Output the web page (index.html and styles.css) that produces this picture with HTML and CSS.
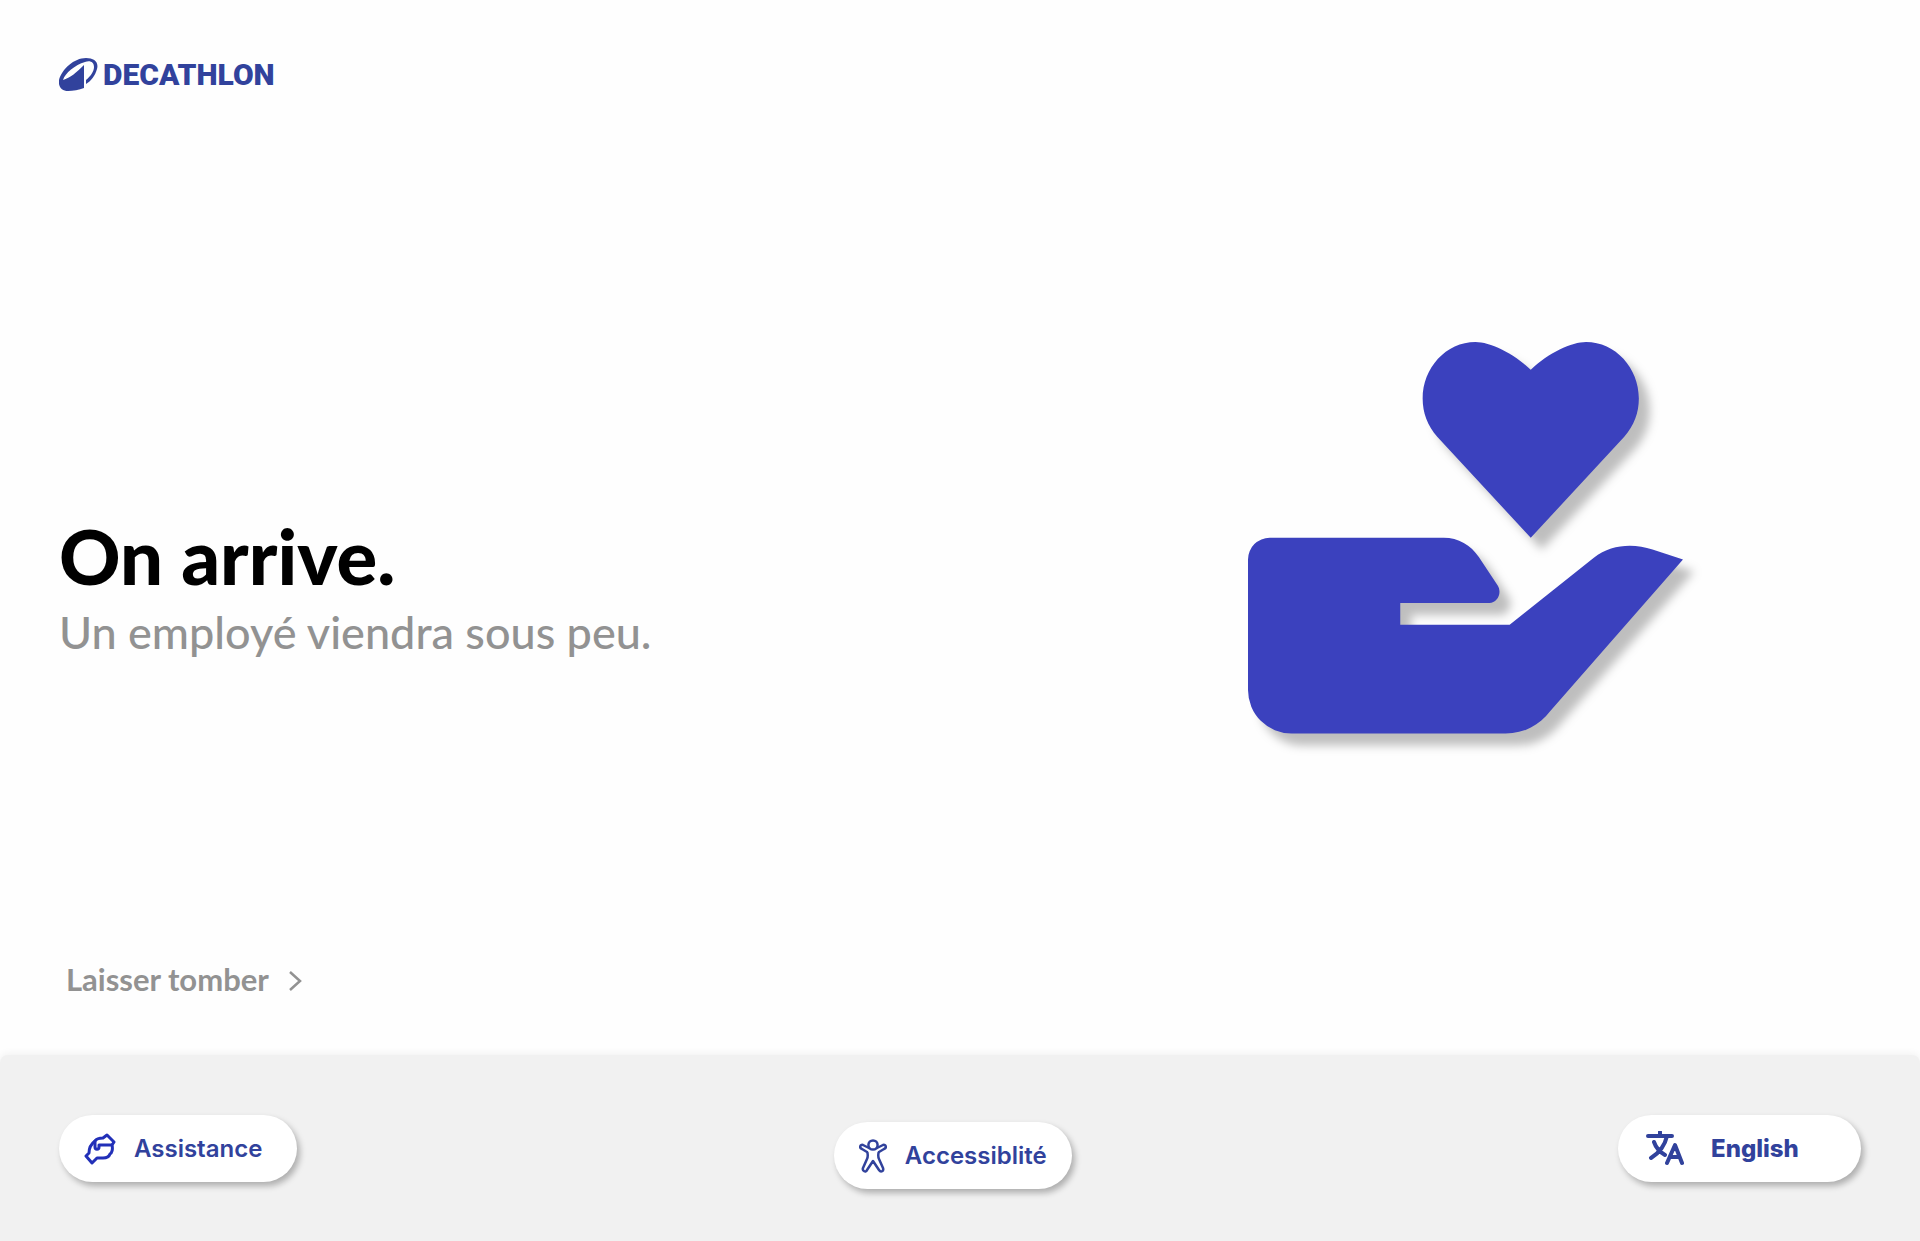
FILE: index.html
```
<!DOCTYPE html>
<html lang="fr">
<head>
    <meta charset="UTF-8">
    <meta name="viewport" content="width=device-width, initial-scale=1.0">
    <title>Decathlon - Assistance</title>
    <link rel="stylesheet" href="styles.css">
</head>
<body>
    <header class="header">
        <a href="#" class="logo">
            <svg class="logo-mark" viewBox="0 0 40 33" aria-hidden="true">
                <path fill-rule="evenodd" d="M27 0C35 0 40 4 38 11C36 18 32 23 27 26V22C32 18 35 13 35 9C35 4 31 2 26 4C16 7 6 15 4 22C11 20 18 14 25 7V30C20 32 14 33 9 33C3 33 -1 29 0 22C3 11 15 0 27 0Z"/>
            </svg>
            <span class="logo-text">DECATHLON</span>
        </a>
    </header>

    <main class="main">
        <div class="message">
            <h1 class="title">On arrive.</h1>
            <p class="subtitle">Un employé viendra sous peu.</p>
        </div>
        <div class="art">
            <svg class="hand" viewBox="0 0 20 18" role="img" aria-label="Main avec un coeur">
                <path d="M13 1.28C12.2.5 11.1 0 10.46 0C9.1 0 8.03 1.2 8.03 2.6C8.03 3.25 8.25 3.85 8.7 4.36L13 9L17.3 4.36C17.75 3.85 17.97 3.25 17.97 2.6C17.97 1.2 16.9 0 15.54 0C14.9 0 13.8.5 13 1.28Z"/>
                <path d="M0 10A1 1 0 0 1 1 9H9C9.67 9 10.25 9.33 10.62 9.9L11.48 11.2C11.7 11.55 11.45 12 11.1 12H7V13H12.03L15.9 9.92C16.7 9.3 17.7 9.25 18.6 9.54L20 10L13.9 16.96C13.4 17.6 12.7 18 11.85 18H2A2 2 0 0 1 0 16Z"/>
            </svg>
        </div>
        <a href="#" class="cancel">
            Laisser tomber
            <svg class="chevron" viewBox="0 0 12 20" aria-hidden="true"><path d="M1 1L11 10L1 19"/></svg>
        </a>
    </main>

    <footer class="footer">
        <button type="button" class="pill">
            <svg class="icon icon-help" viewBox="0 0 32 32" aria-hidden="true">
                <path d="M23 2L30 9L28 12C29 16 28 20 26 21C25 24 23 25 19 25H13L8 30L2 23L5 20C5 15 7 11 11 8C13 5 16 5 19 5Z"/>
                <path d="M11 8V14C11 17 15 17 15 14V12H28"/>
            </svg>
            Assistance
        </button>
        <button type="button" class="pill pill-middle">
            <svg class="icon icon-access" viewBox="0 0 28 34" aria-hidden="true">
                <circle cx="14" cy="6" r="4.6"/>
                <path d="M10 9L4 6C1 5 0 9 3 10L8 13C9 14 9 18 8 20L4 29C3 32 7 34 8 31L14 22L20 31C22 34 25 32 24 29L20 20C19 18 19 14 20 13L25 10C28 9 27 5 24 6L18 9"/>
            </svg>
            Accessiblité
        </button>
        <button type="button" class="pill pill-lang">
            <svg class="icon icon-lang" viewBox="0 0 38 36" aria-hidden="true">
                <path d="M2 5H26M14 1V5M21 5C19 14 13 22 5 27M8 11C10 17 14 21 19 24M21 32L29 14L36 32M24 26H33"/>
            </svg>
            English
        </button>
    </footer>
</body>
</html>
```

FILE: styles.css
```
*{
    box-sizing: border-box;
}
body{
    margin: 0;
    min-height: 100vh;
    display: flex;
    flex-direction: column;
    background: #fefefe;
    font-family: Lato, "Liberation Sans", sans-serif;
}
a{
    text-decoration: none;
}
h1,p{
    margin: 0;
}
/* logo */
.header{
    padding: 58px 59px 0;
}
.logo{
    display: inline-flex;
    align-items: center;
    gap: 4px;
    height: 33px;
    color: #31429c;
}
.logo-mark{
    width: 40px;
    height: 33px;
    fill: currentColor;
}
.logo-text{
    font-family: Roboto, "Liberation Sans", sans-serif;
    font-size: 30px;
    font-weight: 900;
    line-height: 32px;
}
/* message */
.main{
    flex: 1;
    display: grid;
    grid-template-columns: 1fr 1fr;
    grid-template-rows: 1fr auto;
    padding: 0 59px 58px;
}
.message{
    align-self: center;
    padding-top: 122px;
}
.title{
    margin-bottom: 6px;
    font-size: 76px;
    font-weight: 900;
    line-height: 80px;
    color: #000;
}
.subtitle{
    font-size: 45px;
    font-weight: 500;
    line-height: 60px;
    color: #929292;
}
.art{
    display: flex;
    align-items: center;
    justify-content: flex-end;
    padding: 20px 178px 0 0;
}
.hand{
    width: 435px;
    fill: #3b41be;
    overflow: visible;
    filter: drop-shadow(11px 12px 5px rgba(0,0,0,.25));
}
.cancel{
    display: flex;
    align-items: baseline;
    justify-self: start;
    gap: 20px;
    padding-left: 7px;
    font-size: 31px;
    font-weight: 700;
    line-height: 36px;
    color: #929292;
}
.chevron{
    width: 12px;
    height: 20px;
    fill: none;
    stroke: currentColor;
    stroke-width: 2.5;
    overflow: visible;
}
/* bottom bar */
.footer{
    display: grid;
    grid-template-columns: 43% 1fr auto;
    justify-items: start;
    min-height: 186px;
    padding: 60px 59px 52px;
    background: #f1f1f1;
    border-radius: 8px 8px 0 0;
    box-shadow: 0 -1px 8px rgba(0,0,0,.06);
}
.pill{
    display: flex;
    align-items: center;
    gap: 18px;
    min-width: 238px;
    height: 67px;
    padding: 0 25px;
    border: 0;
    border-radius: 34px;
    background: #fff;
    box-shadow: 3px 4px 6px rgba(0,0,0,.28);
    color: #31429c;
    font-family: Inter, "Liberation Sans", sans-serif;
    font-size: 24px;
    font-weight: 600;
    cursor: pointer;
}
.pill-middle{
    align-self: end;
}
.pill-lang{
    gap: 27px;
    min-width: 243px;
    padding-left: 28px;
    font-weight: 800;
}
.icon{
    flex: none;
    fill: none;
    stroke: currentColor;
    stroke-width: 3;
    stroke-linecap: round;
    stroke-linejoin: round;
}
.icon-help{
    width: 32px;
    color: #2230b8;
}
.icon-access{
    width: 28px;
    stroke-width: 2.5;
}
.icon-lang{
    width: 38px;
    stroke-width: 4;
}
```
